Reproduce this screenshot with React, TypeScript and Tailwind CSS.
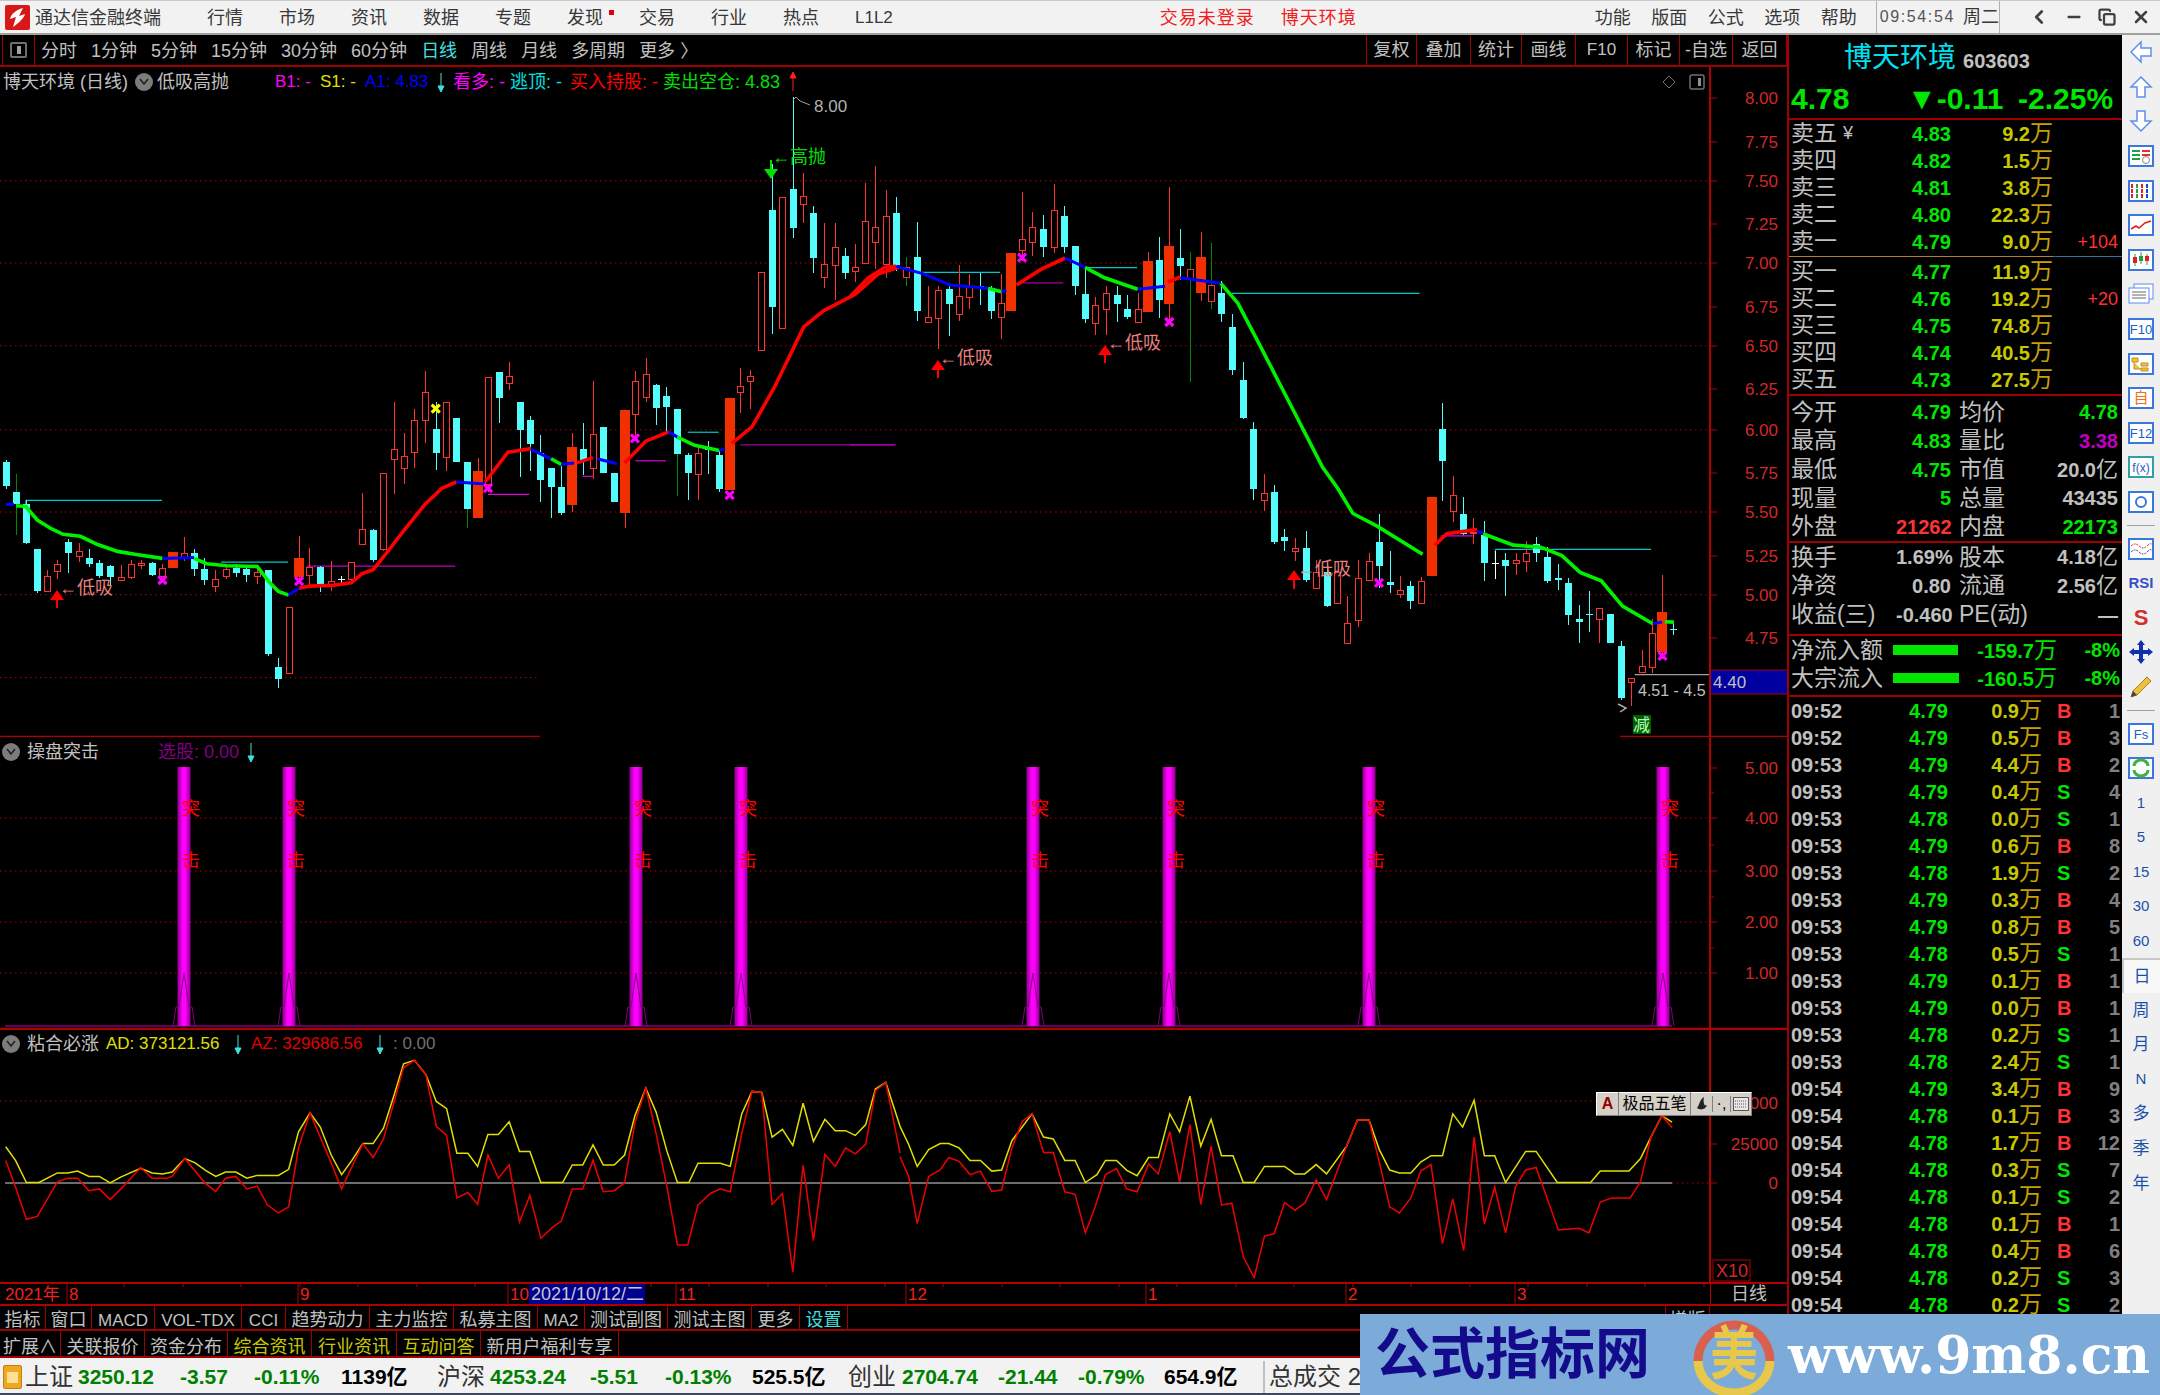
import { ChevronLeft, Minus, Copy, X } from "lucide-react";

// chart numbers below were read off zoomed crops, so they are kept in crop
// coordinates and converted here
const x6 = (z: number) => z / 1.742;
const y6 = (z: number) => 80 + z / 2.45;
const x7 = (z: number) => 850 + z / 1.6505;
const y7 = (z: number) => 80 + z / 2.376;
const x8 = (z: number) => z / 1.742;
const x9 = (z: number) => 900 + z / 1.742;
const y8 = (z: number) => 730 + z / 2.8;

type Candle = [number, string, number, number, number, number];

const candlesA: Candle[] = [
  [10, "c", 937, 995, 932, 1002], [28, "G", 1010, 1040, 965, 1115], [46, "c", 1040, 1135, 1030, 1138], [64, "c", 1150, 1252, 1150, 1258],
  [82, "r", 1215, 1252, 1200, 1255], [100, "r", 1187, 1203, 1175, 1222], [118, "c", 1132, 1160, 1125, 1208], [137, "r", 1155, 1165, 1135, 1180],
  [155, "c", 1172, 1187, 1150, 1192], [173, "c", 1183, 1215, 1175, 1220], [191, "c", 1190, 1218, 1188, 1240], [210, "r", 1217, 1225, 1188, 1228],
  [228, "r", 1187, 1218, 1175, 1222], [246, "r", 1183, 1188, 1175, 1198], [265, "c", 1183, 1212, 1180, 1214], [283, "r", 1195, 1215, 1185, 1218],
  [301, "R", 1157, 1196, 1157, 1196], [320, "r", 1158, 1170, 1120, 1178], [338, "c", 1158, 1198, 1150, 1215], [356, "c", 1198, 1225, 1170, 1238],
  [375, "r", 1222, 1240, 1200, 1255], [393, "r", 1198, 1215, 1185, 1222], [411, "c", 1195, 1208, 1185, 1218], [429, "c", 1197, 1212, 1188, 1230],
  [448, "r", 1205, 1215, 1190, 1235], [466, "c", 1200, 1407, 1200, 1410], [484, "c", 1437, 1468, 1415, 1490], [503, "r", 1290, 1452, 1290, 1452],
  [521, "R", 1172, 1218, 1118, 1225], [539, "r", 1193, 1212, 1147, 1245], [557, "c", 1192, 1235, 1190, 1255], [576, "r", 1228, 1240, 1178, 1252],
  [594, "w", 1222, 1224, 1215, 1232], [612, "r", 1180, 1222, 1180, 1235], [631, "r", 1100, 1137, 1013, 1137], [649, "c", 1102, 1175, 1100, 1180],
  [667, "r", 963, 1150, 963, 1155], [686, "r", 905, 928, 790, 1015], [704, "r", 920, 950, 865, 990], [722, "r", 833, 912, 805, 950],
  [740, "r", 765, 832, 712, 890], [759, "c", 855, 913, 790, 955], [777, "r", 790, 923, 788, 958], [795, "c", 827, 935, 827, 935],
  [814, "G", 937, 1050, 937, 1098], [832, "R", 958, 1072, 925, 1072], [850, "r", 728, 990, 728, 1010], [869, "c", 716, 780, 716, 840],
  [887, "r", 725, 743, 690, 760], [905, "c", 790, 858, 790, 972], [923, "c", 833, 892, 823, 958], [941, "c", 915, 980, 870, 1035],
  [960, "c", 950, 998, 950, 1072], [978, "c", 998, 1062, 945, 1065], [997, "R", 900, 1042, 865, 1058], [1015, "c", 903, 930, 840, 968],
  [1033, "r", 868, 950, 738, 978], [1051, "c", 850, 962, 850, 962], [1070, "c", 962, 1035, 962, 1035], [1088, "R", 808, 1060, 808, 1098],
  [1106, "r", 738, 818, 712, 885], [1125, "r", 720, 777, 680, 790], [1143, "c", 748, 803, 745, 845], [1161, "c", 775, 800, 752, 865],
  [1180, "G", 805, 917, 805, 1018], [1198, "c", 918, 962, 915, 1028], [1216, "r", 915, 965, 895, 1028], [1234, "c", 905, 907, 885, 965],
  [1253, "c", 918, 1002, 905, 1010], [1271, "R", 778, 1005, 778, 1005], [1289, "r", 750, 765, 705, 815], [1307, "r", 725, 737, 710, 805],
  [1326, "r", 470, 662, 470, 662], [1344, "c", 318, 557, 205, 622], [1362, "r", 287, 607, 287, 607], [1381, "c", 268, 362, 42, 388],
  [1399, "r", 283, 305, 228, 350], [1417, "c", 327, 435, 308, 472], [1436, "r", 452, 482, 350, 510], [1454, "r", 408, 453, 350, 538],
  [1472, "c", 430, 472, 412, 488],
];

const candlesB: Candle[] = [
  [8, "r", 445, 455, 390, 480], [24, "r", 335, 435, 245, 435], [41, "r", 350, 385, 205, 450], [59, "r", 323, 437, 262, 470],
  [76, "c", 316, 440, 278, 455], [93, "g", 445, 468, 420, 490], [110, "c", 420, 550, 338, 572], [128, "r", 563, 575, 490, 576],
  [146, "r", 498, 565, 490, 640], [163, "c", 497, 533, 490, 608], [180, "r", 513, 557, 440, 572], [197, "r", 490, 515, 460, 545],
  [215, "c", 489, 491, 458, 535], [232, "c", 495, 548, 490, 567], [249, "r", 530, 563, 460, 615], [266, "R", 412, 550, 412, 550],
  [284, "r", 377, 405, 265, 430], [301, "r", 350, 385, 313, 417], [318, "c", 355, 397, 320, 420], [336, "r", 310, 397, 248, 412],
  [353, "c", 323, 397, 300, 412], [371, "c", 395, 490, 395, 510], [388, "c", 508, 568, 450, 578], [405, "r", 535, 578, 515, 607],
  [423, "r", 507, 545, 490, 605], [440, "c", 512, 533, 490, 575], [458, "c", 545, 562, 510, 568], [475, "r", 545, 575, 505, 576],
  [492, "R", 430, 552, 408, 552], [510, "c", 427, 522, 372, 565], [527, "R", 395, 533, 255, 575], [544, "c", 422, 443, 355, 475],
  [561, "g", 450, 472, 408, 718], [579, "R", 420, 505, 360, 525], [596, "g", 488, 525, 388, 545], [613, "c", 505, 555, 478, 575],
  [631, "c", 588, 690, 555, 700], [648, "c", 712, 802, 670, 805], [665, "c", 830, 972, 812, 997], [683, "r", 982, 998, 937, 1025],
  [700, "c", 980, 1098, 962, 1102], [717, "c", 1087, 1096, 1068, 1120], [735, "r", 1112, 1120, 1088, 1143], [752, "c", 1112, 1187, 1072, 1192],
  [769, "r", 1170, 1207, 1140, 1208], [787, "c", 1170, 1250, 1150, 1252], [804, "r", 1170, 1243, 1170, 1243], [821, "r", 1290, 1338, 1225, 1338],
  [839, "r", 1183, 1282, 1140, 1300], [856, "r", 1143, 1188, 1125, 1190], [873, "c", 1098, 1155, 1030, 1208], [891, "c", 1193, 1200, 1118, 1218],
  [908, "r", 1212, 1222, 1178, 1230], [925, "c", 1202, 1238, 1190, 1258], [943, "r", 1190, 1243, 1182, 1243], [960, "R", 990, 1178, 990, 1178],
  [977, "c", 830, 905, 768, 1000], [995, "r", 987, 1023, 940, 1050], [1012, "c", 1030, 1078, 990, 1082], [1029, "r", 1074, 1077, 1040, 1102],
  [1047, "c", 1080, 1147, 1048, 1190], [1064, "w", 1147, 1150, 1120, 1185], [1081, "c", 1140, 1155, 1125, 1225], [1099, "r", 1140, 1148, 1125, 1175],
  [1116, "r", 1125, 1142, 1095, 1170], [1133, "c", 1103, 1125, 1087, 1145], [1150, "c", 1133, 1190, 1110, 1195], [1168, "c", 1183, 1188, 1150, 1212],
  [1185, "c", 1195, 1270, 1183, 1295], [1203, "c", 1280, 1288, 1248, 1338], [1220, "c", 1268, 1270, 1215, 1312], [1237, "r", 1255, 1280, 1255, 1338],
  [1254, "c", 1268, 1338, 1268, 1338], [1273, "c", 1345, 1468, 1332, 1472], [1289, "r", 1420, 1430, 1420, 1488], [1307, "r", 1393, 1406, 1355, 1410],
  [1324, "r", 1315, 1395, 1280, 1410], [1341, "R", 1265, 1360, 1175, 1375], [1358, "c", 1304, 1306, 1288, 1318],
];

type Seg = [string, number[]];

const maA: Seg[] = [
  ["#0000ff", [10, 1040, 24, 1040]],
  ["#00f000", [28, 1043, 45, 1045, 65, 1078, 90, 1100, 110, 1113, 140, 1118, 170, 1138, 205, 1155, 240, 1163, 283, 1172]],
  ["#0000ff", [283, 1172, 338, 1170]],
  ["#00f000", [338, 1172, 360, 1185, 395, 1190, 448, 1192, 470, 1232, 485, 1253, 503, 1262]],
  ["#0000ff", [503, 1262, 521, 1245]],
  ["#ff0000", [521, 1245, 540, 1240, 580, 1238, 612, 1232, 630, 1210, 650, 1200, 670, 1165, 700, 1110, 740, 1040, 770, 1000, 795, 985]],
  ["#0000ff", [795, 985, 845, 990]],
  ["#ff0000", [845, 985, 885, 912, 925, 903]],
  ["#0000ff", [925, 905, 960, 928]],
  ["#00f000", [960, 928, 978, 942]],
  ["#0000ff", [978, 942, 1000, 938]],
  ["#ff0000", [1005, 938, 1033, 925]],
  ["#0000ff", [1040, 928, 1075, 940]],
  ["#ff0000", [1088, 938, 1125, 885, 1165, 862]],
  ["#0000ff", [1165, 862, 1180, 875]],
  ["#00f000", [1180, 875, 1210, 895, 1253, 908]],
  ["#0000ff", [1253, 908, 1262, 903]],
  ["#ff0000", [1275, 890, 1310, 850, 1350, 750, 1400, 605, 1435, 565, 1490, 525, 1530, 475, 1568, 458]],
];

const maB: Seg[] = [
  ["#ff0000", [0, 515, 30, 470, 58, 445, 76, 443]],
  ["#0000ff", [76, 443, 120, 460, 165, 487, 228, 495]],
  ["#00f000", [228, 495, 250, 503]],
  ["#0000ff", [250, 503, 258, 500]],
  ["#ff0000", [275, 487, 315, 450, 355, 423]],
  ["#0000ff", [355, 423, 388, 445]],
  ["#00f000", [388, 445, 420, 470, 475, 497]],
  ["#0000ff", [475, 497, 520, 490]],
  ["#ff0000", [525, 480, 545, 468]],
  ["#0000ff", [545, 470, 612, 483]],
  ["#00f000", [612, 483, 640, 530, 680, 640, 730, 780, 780, 920, 805, 970, 830, 1030, 870, 1060, 945, 1127]],
  ["#ff0000", [965, 1105, 985, 1078, 1035, 1068]],
  ["#0000ff", [1035, 1072, 1045, 1078]],
  ["#00f000", [1045, 1078, 1095, 1105, 1140, 1110, 1175, 1130, 1205, 1170, 1240, 1190, 1275, 1250, 1325, 1292]],
  ["#0000ff", [1325, 1292, 1340, 1288]],
  ["#00f000", [1345, 1287, 1360, 1288]],
];

const levelsA: [string, number, number, number][] = [
  ["#00c8c8", 45, 282, 1030], ["#00c8c8", 385, 502, 1181], ["#c000c0", 535, 793, 1191], ["#e000e0", 850, 922, 1015],
  ["#e000e0", 1015, 1033, 971], ["#e000e0", 1107, 1160, 933], ["#00c8c8", 1198, 1252, 863], ["#a000a0", 1290, 1560, 894],
];
const levelsB: [string, number, number, number][] = [
  ["#00c8c8", 110, 248, 457], ["#a000a0", 283, 352, 482], ["#a000a0", 0, 75, 867], ["#00c8c8", 388, 474, 446],
  ["#00c8c8", 630, 940, 507], ["#e000e0", 975, 1028, 1083], ["#00c8c8", 1065, 1322, 1115], ["#a0a0a0", 1295, 1420, 1413],
];

const yellowA = [10, 1167, 27, 1205, 46, 1267, 68, 1267, 100, 1240, 118, 1240, 135, 1235, 155, 1250, 173, 1250, 192, 1268, 210, 1252, 245, 1227, 265, 1240, 283, 1243, 300, 1238, 322, 1200, 340, 1212, 358, 1233, 376, 1250, 393, 1238, 411, 1238, 430, 1255, 448, 1247, 485, 1247, 503, 1230, 520, 1125, 540, 1072, 558, 1112, 577, 1190, 595, 1245, 613, 1205, 632, 1158, 650, 1158, 668, 1115, 685, 1030, 703, 935, 722, 925, 742, 965, 760, 1040, 778, 1060, 796, 1185, 815, 1185, 832, 1222, 850, 1133, 868, 1133, 887, 1097, 905, 1180, 923, 1180, 942, 1267, 980, 1267, 997, 1218, 1015, 1218, 1033, 1162, 1051, 1218, 1070, 1218, 1088, 1190, 1106, 1080, 1125, 1003, 1143, 1070, 1162, 1180, 1180, 1267, 1200, 1267, 1216, 1213, 1255, 1213, 1272, 1222, 1292, 1075, 1310, 1012, 1327, 1015, 1345, 1140, 1363, 1118, 1381, 1163, 1399, 1045, 1417, 1152, 1437, 1090, 1455, 1122, 1473, 1122, 1490, 1135, 1508, 1105, 1525, 1005, 1543, 987, 1568, 1110];
const redA = [10, 1205, 27, 1280, 46, 1370, 65, 1362, 100, 1265, 118, 1255, 135, 1255, 155, 1290, 173, 1285, 192, 1315, 215, 1278, 245, 1225, 265, 1255, 290, 1255, 300, 1250, 322, 1200, 358, 1270, 376, 1292, 393, 1255, 411, 1250, 430, 1285, 448, 1277, 466, 1330, 485, 1352, 503, 1335, 520, 1170, 540, 1072, 575, 1205, 595, 1285, 632, 1158, 650, 1197, 668, 1145, 685, 1050, 703, 945, 722, 925, 742, 965, 760, 1110, 778, 1135, 796, 1310, 815, 1295, 832, 1328, 850, 1190, 868, 1255, 887, 1218, 905, 1378, 923, 1303, 942, 1423, 963, 1392, 978, 1375, 997, 1285, 1015, 1285, 1033, 1205, 1051, 1293, 1070, 1290, 1088, 1268, 1106, 1100, 1125, 1003, 1143, 1130, 1162, 1280, 1180, 1442, 1198, 1442, 1216, 1330, 1238, 1297, 1255, 1285, 1272, 1293, 1292, 1130, 1310, 1012, 1327, 1015, 1345, 1328, 1363, 1298, 1381, 1518, 1399, 1218, 1417, 1430, 1437, 1188, 1455, 1222, 1473, 1170, 1490, 1187, 1508, 1160, 1525, 1010, 1543, 987, 1568, 1185];
const yellowB = [0, 1110, 15, 1160, 30, 1222, 50, 1175, 70, 1158, 85, 1158, 103, 1170, 122, 1205, 140, 1205, 160, 1235, 177, 1232, 195, 1150, 230, 1075, 250, 1140, 267, 1145, 287, 1205, 305, 1205, 323, 1267, 343, 1245, 358, 1205, 377, 1205, 395, 1233, 413, 1248, 433, 1197, 450, 1197, 470, 1075, 487, 1125, 505, 1025, 524, 1165, 542, 1090, 560, 1192, 580, 1192, 598, 1267, 617, 1267, 635, 1222, 670, 1222, 688, 1243, 705, 1243, 725, 1217, 743, 1243, 778, 1165, 797, 1092, 817, 1092, 835, 1175, 853, 1232, 870, 1240, 890, 1240, 907, 1210, 925, 1192, 945, 1192, 963, 1075, 980, 1112, 1000, 1037, 1018, 1192, 1036, 1192, 1055, 1267, 1090, 1180, 1108, 1180, 1145, 1267, 1203, 1267, 1220, 1235, 1270, 1235, 1290, 1200, 1308, 1140, 1327, 1080, 1345, 1098];
const redB = [0, 1195, 15, 1250, 30, 1382, 50, 1250, 70, 1232, 85, 1197, 103, 1208, 122, 1245, 140, 1235, 160, 1292, 177, 1288, 195, 1170, 213, 1095, 230, 1075, 250, 1183, 267, 1183, 287, 1293, 305, 1300, 323, 1408, 340, 1335, 358, 1245, 377, 1228, 395, 1285, 413, 1293, 433, 1215, 450, 1243, 470, 1125, 487, 1265, 505, 1105, 524, 1328, 542, 1165, 560, 1330, 578, 1325, 598, 1475, 617, 1533, 635, 1417, 652, 1410, 670, 1323, 688, 1345, 705, 1325, 725, 1260, 743, 1315, 778, 1165, 797, 1092, 817, 1092, 835, 1210, 853, 1335, 870, 1352, 890, 1310, 907, 1235, 925, 1217, 945, 1438, 963, 1313, 982, 1458, 1000, 1140, 1018, 1383, 1036, 1280, 1055, 1408, 1072, 1280, 1090, 1232, 1108, 1225, 1127, 1310, 1147, 1400, 1183, 1395, 1200, 1408, 1220, 1322, 1240, 1310, 1272, 1310, 1290, 1265, 1308, 1140, 1327, 1080, 1345, 1113];

const toPts = (a: number[], fx: (n: number) => number, fy: (n: number) => number) => {
  const out: string[] = [];
  for (let i = 0; i < a.length; i += 2) out.push(`${fx(a[i]).toFixed(1)},${fy(a[i + 1]).toFixed(1)}`);
  return out.join(" ");
};

const AXIS = "#b00000";
const GRID = "#b00000";
const LABEL = "#d02828";

function CandleMark({ c, fx, fy }: { c: Candle; fx: (n: number) => number; fy: (n: number) => number }) {
  const [zx, kind, top, bot, hi, lo] = c;
  const x = Math.round(fx(zx));
  const t = Math.round(fy(top));
  const b = Math.round(fy(bot));
  const wick = kind === "c" ? "#54fcfc" : kind === "w" ? "#ffffff" : kind === "g" || kind === "G" ? "#008800" : "#ff3232";
  const solid = kind === "c" || kind === "G" || kind === "w";
  const wide = kind === "R";
  return (
    <g shapeRendering="crispEdges">
      <line x1={x + 0.5} x2={x + 0.5} y1={fy(hi)} y2={fy(lo)} stroke={wick} />
      {wide ? (
        <rect x={x - 5} y={t} width={10} height={b - t} fill="#f03000" />
      ) : solid ? (
        <rect x={x - 3} y={t} width={7} height={Math.max(b - t, 1)} fill={kind === "w" ? "#fff" : "#54fcfc"} />
      ) : (
        <rect x={x - 2.5} y={t + 0.5} width={6} height={Math.max(b - t, 1)} fill="#000" stroke="#ff3232" />
      )}
    </g>
  );
}

const Cross = ({ x, y, c = "#ff00ff" }: { x: number; y: number; c?: string }) => (
  <path d={`M${x - 4} ${y - 4}L${x + 4} ${y + 4}M${x + 4} ${y - 4}L${x - 4} ${y + 4}`} stroke={c} strokeWidth={3.2} />
);

const UpArrow = ({ x, y1, y2 }: { x: number; y1: number; y2: number }) => (
  <g>
    <line x1={x} x2={x} y1={y1 + 8} y2={y2} stroke="#ff0000" strokeWidth={2} />
    <path d={`M${x - 7} ${y1 + 10}L${x} ${y1}L${x + 7} ${y1 + 10}Z`} fill="#ff0000" />
  </g>
);

const Axis = ({ labels }: { labels: [string, number][] }) => (
  <g>
    {labels.map(([t, y]) => (
      <g key={t + y}>
        <line x1={1710} x2={1717} y1={y} y2={y} stroke={AXIS} />
        <text x={1778} y={y + 6} textAnchor="end" fontSize={17} fill={LABEL}>
          {t}
        </text>
      </g>
    ))}
  </g>
);

const HeaderArrow = ({ c = "#40e0e0", up }: { c?: string; up?: boolean }) => (
  <svg width="8" height="20" viewBox="0 0 8 20">
    {up ? <path d="M4 19V4M1 6L4 0L7 6Z" stroke={c} fill={c} /> : <path d="M4 1V16M1 14L4 20L7 14Z" stroke={c} fill={c} />}
  </svg>
);

const FoldDot = () => (
  <span className="w-[18px] h-[18px] rounded-full bg-[#7c7c7c] flex items-center justify-center shrink-0">
    <svg width="10" height="8" viewBox="0 0 10 8">
      <path d="M1 1L5 6L9 1" fill="none" stroke="#222" strokeWidth="1.6" />
    </svg>
  </span>
);

function MainPane() {
  const grid = [180.8, 263, 345.7, 429.8, 512, 594.7];
  return (
    <div className="relative h-[670px] shrink-0">
      <svg width="1787" height="670" viewBox="0 67 1787 670" className="block">
        {grid.map((y) => (
          <line key={y} x1={0} x2={1710} y1={y} y2={y} stroke={GRID} strokeDasharray="1.5 3.5" />
        ))}
        <line x1={0} x2={537} y1={677.6} y2={677.6} stroke={GRID} strokeDasharray="1.5 3.5" />
        {levelsA.map(([c, a, b, y]) => (
          <line key={a} x1={x6(a)} x2={x6(b)} y1={y6(y)} y2={y6(y)} stroke={c} strokeWidth={1.2} />
        ))}
        {levelsB.map(([c, a, b, y]) => (
          <line key={a} x1={x7(a)} x2={x7(b)} y1={y7(y)} y2={y7(y)} stroke={c} strokeWidth={1.2} />
        ))}
        <line x1={x6(45)} x2={x6(45)} y1={y6(1030)} y2={y6(1040)} stroke="#00c8c8" />
        <line x1={x7(1065)} x2={x7(1065)} y1={y7(1115)} y2={y7(1140)} stroke="#00c8c8" />
        {candlesA.map((c) => (
          <CandleMark key={c[0]} c={c} fx={x6} fy={y6} />
        ))}
        {candlesB.map((c) => (
          <CandleMark key={c[0]} c={c} fx={x7} fy={y7} />
        ))}
        {maA.map(([c, p], i) => (
          <polyline key={i} points={toPts(p, x6, y6)} fill="none" stroke={c} strokeWidth={c === "#0000ff" ? 3 : 3.6} />
        ))}
        {maB.map(([c, p], i) => (
          <polyline key={i} points={toPts(p, x7, y7)} fill="none" stroke={c} strokeWidth={c === "#0000ff" ? 3 : 3.6} />
        ))}
        <Cross x={x6(283)} y={y6(1225)} />
        <Cross x={x6(521)} y={y6(1228)} />
        <Cross x={x6(850)} y={y6(1000)} />
        <Cross x={x6(1106)} y={y6(878)} />
        <Cross x={x6(1271)} y={y6(1017)} />
        <Cross x={x6(759)} y={y6(805)} c="#ffff00" />
        <Cross x={x7(284)} y={y7(422)} />
        <Cross x={x7(527)} y={y7(575)} />
        <Cross x={x7(873)} y={y7(1195)} />
        <Cross x={x7(1341)} y={y7(1368)} />

        <UpArrow x={57} y1={590} y2={608} />
        <UpArrow x={938} y1={360} y2={378} />
        <UpArrow x={1105} y1={345} y2={363} />
        <UpArrow x={1294} y1={570} y2={589} />
        <text x={59} y={594} fontSize={18} fill="#e88080">←低吸</text>
        <text x={939} y={364} fontSize={18} fill="#e88080">←低吸</text>
        <text x={1107} y={349} fontSize={18} fill="#e88080">←低吸</text>
        <text x={1297} y={575} fontSize={18} fill="#e88080">←低吸</text>
        <line x1={771} x2={771} y1={160} y2={172} stroke="#00e000" strokeWidth={2} />
        <path d="M764 169L771 179L778 169Z" fill="#00e000" />
        <text x={772} y={163} fontSize={18} fill="#00e000">←高抛</text>
        <path d="M793 100L796 97L800 101L810 105" fill="none" stroke="#a0a0a0" />
        <text x={814} y={112} fontSize={17} fill="#b0b0b0">8.00</text>

        <path d="M1669 76L1675 82L1669 88L1663 82Z" fill="none" stroke="#707070" />
        <rect x={1690} y={75} width={14} height={14} rx={2} fill="none" stroke="#707070" strokeWidth={1.5} />
        <rect x={1698} y={78} width={3} height={8} fill="#909090" />

        <line x1={1710} x2={1710} y1={67} y2={737} stroke={AXIS} strokeWidth={2} />
        <Axis
          labels={[
            ["8.00", 98], ["7.75", 142], ["7.50", 181], ["7.25", 224], ["7.00", 263], ["6.75", 307], ["6.50", 346],
            ["6.25", 389], ["6.00", 430], ["5.75", 473], ["5.50", 512], ["5.25", 556], ["5.00", 595], ["4.75", 638],
          ]}
        />
        <rect x={1711} y={670} width={76} height={24} fill="#0000a0" />
        <line x1={1711} x2={1787} y1={670} y2={670} stroke={AXIS} />
        <line x1={1711} x2={1787} y1={694} y2={694} stroke={AXIS} />
        <text x={1713} y={688} fontSize={17} fill="#c0c0c0">4.40</text>
        <text x={1638} y={696} fontSize={16} fill="#c0c0c0">4.51 - 4.5</text>
        <path d="M1618 704L1626 708L1620 712" fill="none" stroke="#b0b0b0" strokeWidth={1.5} />
        <rect x={1633} y={715} width={18} height={19} fill="#006000" />
        <text x={1633} y={731} fontSize={17} fill="#b0ffb0">减</text>
        <line x1={0} x2={540} y1={736.5} y2={736.5} stroke={AXIS} strokeWidth={1.5} />
        <line x1={1620} x2={1787} y1={736.5} y2={736.5} stroke={AXIS} strokeWidth={1.5} />
      </svg>
      <div className="absolute top-[4px] left-[3px] flex items-center h-[22px] text-[18px] whitespace-nowrap">
        <span className="w-[132px] text-[#c0c0c0]">博天环境 (日线)</span>
        <FoldDot />
        <span className="w-[118px] ml-[4px] text-[#c0c0c0]">低吸高抛</span>
        <span className="w-[45px] text-[#ff00ff] text-[17px]">B1: -</span>
        <span className="w-[45px] text-[#e0e000] text-[17px]">S1: -</span>
        <span className="w-[72px] text-[#0000ff] text-[17px]">A1: 4.83</span>
        <span className="w-[16px] flex"><HeaderArrow /></span>
        <span className="w-[57px] text-[#ff00ff]">看多: -</span>
        <span className="w-[60px] text-[#00e0e0]">逃顶: -</span>
        <span className="w-[93px] text-[#ff0000]">买入持股: -</span>
        <span className="w-[126px] text-[#00e000]">卖出空仓: 4.83</span>
        <HeaderArrow c="#ff2020" up />
      </div>
    </div>
  );
}

const spikes = [184, 289, 636, 741, 1033, 1169, 1369, 1663];

function SignalPane() {
  return (
    <div className="relative h-[293px] shrink-0">
      <svg width="1787" height="293" viewBox="0 737 1787 293" className="block">
        <defs>
          <linearGradient id="spike" x1="0" x2="1" y1="0" y2="0">
            <stop offset="0" stopColor="#900090" />
            <stop offset="0.4" stopColor="#ff00ff" />
            <stop offset="0.6" stopColor="#ff00ff" />
            <stop offset="1" stopColor="#900090" />
          </linearGradient>
        </defs>
        {[818, 871, 922, 973].map((y) => (
          <line key={y} x1={0} x2={1710} y1={y} y2={y} stroke={GRID} strokeDasharray="1.5 3.5" />
        ))}
        <line x1={5} x2={1672} y1={1026} y2={1026} stroke="#800080" strokeWidth={1.5} />
        {spikes.map((c) => (
          <g key={c}>
            <rect x={c - 6.5} y={767} width={13} height={259} fill="url(#spike)" />
            <polyline
              points={`${c - 11},1026 ${c - 8},1007 ${c - 5},1007 ${c},973 ${c + 5},1007 ${c + 8},1007 ${c + 11},1026`}
              fill="none"
              stroke="#800080"
            />
            <text x={c - 2} y={815} fontSize={18} fill="#ff0000">突</text>
            <text x={c - 2} y={867} fontSize={18} fill="#ff0000">击</text>
          </g>
        ))}
        <line x1={1710} x2={1710} y1={737} y2={1030} stroke={AXIS} strokeWidth={2} />
        <Axis labels={[["5.00", 768], ["4.00", 818], ["3.00", 871], ["2.00", 922], ["1.00", 973]]} />
        {[793, 845, 897, 948].map((y) => (
          <line key={y} x1={1710} x2={1714} y1={y} y2={y} stroke={AXIS} />
        ))}
        <line x1={0} x2={1787} y1={1029} y2={1029} stroke={AXIS} strokeWidth={2.5} />
      </svg>
      <div className="absolute top-[4px] left-[2px] flex items-center h-[22px] text-[18px] whitespace-nowrap">
        <FoldDot />
        <span className="w-[131px] ml-[7px] text-[#c0c0c0]">操盘突击</span>
        <span className="w-[89px] text-[#800080]">选股: 0.00</span>
        <HeaderArrow />
      </div>
    </div>
  );
}

function LinePane() {
  return (
    <div className="relative h-[252px] shrink-0">
      <svg width="1787" height="252" viewBox="0 1030 1787 252" className="block">
        <line x1={0} x2={1710} y1={1101} y2={1101} stroke={GRID} strokeDasharray="1.5 3.5" />
        <line x1={5} x2={1672} y1={1183} y2={1183} stroke="#909090" strokeWidth={1.5} />
        <line x1={1672} x2={1710} y1={1183} y2={1183} stroke={GRID} strokeDasharray="1.5 3.5" />
        <polyline points={toPts(yellowA, x8, y8)} fill="none" stroke="#e0e000" strokeWidth={1.5} />
        <polyline points={toPts(yellowB, x9, y8)} fill="none" stroke="#e0e000" strokeWidth={1.5} />
        <polyline points={toPts(redA, x8, y8)} fill="none" stroke="#f00000" strokeWidth={1.5} />
        <polyline points={toPts(redB, x9, y8)} fill="none" stroke="#f00000" strokeWidth={1.5} />
        <line x1={1710} x2={1710} y1={1030} y2={1282} stroke={AXIS} strokeWidth={2} />
        <Axis labels={[["25000", 1144], ["0", 1183]]} />
        <text x={1778} y={1109} textAnchor="end" fontSize={17} fill={LABEL}>50000</text>
        <rect x={1713} y={1260} width={37} height={21} fill="none" stroke={AXIS} />
        <text x={1716} y={1277} fontSize={18} fill={LABEL}>X10</text>
      </svg>
      <div className="absolute top-[3px] left-[2px] flex items-center h-[22px] text-[18px] whitespace-nowrap">
        <FoldDot />
        <span className="w-[79px] ml-[7px] text-[#c0c0c0]">粘合必涨</span>
        <span className="w-[128px] text-[#e0e000] text-[17px]">AD: 373121.56</span>
        <HeaderArrow />
        <span className="w-[125px] ml-[9px] text-[#e00000] text-[17px]">AZ: 329686.56</span>
        <HeaderArrow />
        <span className="ml-[9px] text-[#707070] text-[17px]">: 0.00</span>
      </div>
      <div className="absolute left-[1596px] top-[62px] w-[156px] h-[24px] bg-[#d4d0c8] border border-t-white border-l-white border-r-[#808080] border-b-[#808080] flex items-center text-[16px] text-black">
        <span className="w-[22px] text-center text-[#900000] font-bold border-r border-[#808080]">A</span>
        <span className="w-[72px] text-center border-r border-[#808080] whitespace-nowrap">极品五笔</span>
        <span className="w-[22px] flex justify-center border-r border-[#808080]">
          <svg width="12" height="16" viewBox="0 0 12 16"><path d="M8 1C4 3 3 10 1 12C5 15 10 13 11 9C8 11 7 6 8 1Z" fill="#222" /></svg>
        </span>
        <span className="w-[18px] text-center border-r border-[#808080] leading-none">·,</span>
        <span className="flex-1 flex justify-center">
          <svg width="16" height="14" viewBox="0 0 16 14"><rect x="0.5" y="0.5" width="15" height="13" fill="#e8e8e8" stroke="#555" /><path d="M2 4H14M2 7H14M2 10H14" stroke="#555" strokeDasharray="1 1" /></svg>
        </span>
      </div>
    </div>
  );
}

function DateAxis() {
  const ticks: number[] = [];
  for (let x = 124; x < 1710; x += 58.5) ticks.push(Math.round(x));
  const months: [string, number][] = [["8", 67], ["9", 298], ["10", 508], ["11", 676], ["12", 906], ["1", 1146], ["2", 1346], ["3", 1515]];
  return (
    <div className="flex h-[24px] shrink-0 border-t-2 border-b-2 border-[#b00000]">
      <svg width="1710" height="20" viewBox="0 0 1710 20" className="block shrink-0">
        {ticks.map((x) => (
          <line key={x} x1={x} x2={x} y1={0} y2={3} stroke={AXIS} />
        ))}
        <text x={5} y={16} fontSize={17} fill="#f02020">2021年</text>
        {months.map(([m, x]) => (
          <g key={m}>
            <line x1={x} x2={x} y1={0} y2={20} stroke={AXIS} />
            <text x={x + 2} y={16} fontSize={17} fill="#f02020">{m}</text>
          </g>
        ))}
        <rect x={529} y={0} width={116} height={20} fill="#000090" />
        <text x={531} y={16} fontSize={18} fill="#c8c8c8">2021/10/12/二</text>
      </svg>
      <div className="flex-1 border-l border-[#b00000] text-[18px] text-[#c0c0c0] flex items-center justify-center">日线</div>
    </div>
  );
}

const tabCell = "h-full flex items-center justify-center border-r border-[#a00000] shrink-0 whitespace-nowrap";

function TabRows() {
  return (
    <div className="text-[18px] text-[#c0c0c0] shrink-0">
      <div className="flex h-[25px] border-b-2 border-[#a00000]">
        <span className={`${tabCell} w-[46px] pt-[6px]`}>指标</span>
        <span className={`${tabCell} w-[46px] pt-[6px]`}>窗口</span>
        <span className={`${tabCell} w-[63px] pt-[6px] text-[17px]`}>MACD</span>
        <span className={`${tabCell} w-[87px] pt-[6px] text-[17px]`}>VOL-TDX</span>
        <span className={`${tabCell} w-[44px] pt-[6px] text-[17px]`}>CCI</span>
        <span className={`${tabCell} w-[84px] pt-[6px]`}>趋势动力</span>
        <span className={`${tabCell} w-[84px] pt-[6px]`}>主力监控</span>
        <span className={`${tabCell} w-[84px] pt-[6px]`}>私募主图</span>
        <span className={`${tabCell} w-[47px] pt-[6px] text-[17px]`}>MA2</span>
        <span className={`${tabCell} w-[83px] pt-[6px]`}>测试副图</span>
        <span className={`${tabCell} w-[84px] pt-[6px]`}>测试主图</span>
        <span className={`${tabCell} w-[48px] pt-[6px]`}>更多</span>
        <span className={`${tabCell} w-[48px] pt-[6px] text-[#40e0e0]`}>设置</span>
        <span className={`${tabCell} ml-[817px] w-[45px] pt-[6px] border-l`}>增版</span>
      </div>
      <div className="flex h-[27px] border-b-2 border-[#a00000]">
        <span className={`${tabCell} w-[61px] pt-[7px]`}>扩展∧</span>
        <span className={`${tabCell} w-[84px] pt-[7px]`}>关联报价</span>
        <span className={`${tabCell} w-[83px] pt-[7px]`}>资金分布</span>
        <span className={`${tabCell} w-[84px] pt-[7px] text-[#c8c800]`}>综合资讯</span>
        <span className={`${tabCell} w-[85px] pt-[7px] text-[#c8c800]`}>行业资讯</span>
        <span className={`${tabCell} w-[84px] pt-[7px] text-[#c8c800]`}>互动问答</span>
        <span className={`${tabCell} w-[138px] pt-[7px]`}>新用户福利专享</span>
      </div>
    </div>
  );
}

const num = "font-bold text-[20px] leading-none";
const cjk = "text-[23px] leading-none text-[#c0c0c0] whitespace-nowrap";

function BookRow({ label, price, vol, extra, mark }: { label: string; price: string; vol: string; extra?: string; mark?: boolean }) {
  return (
    <div className="flex items-center h-[27px]">
      <span className={`${cjk} w-[52px]`}>{label}</span>
      <span className="w-[48px] text-[#c0c0c0] text-[18px]">{mark ? "¥" : ""}</span>
      <span className={`${num} w-[60px] text-right text-[#00e600]`}>{price}</span>
      <span className={`${num} w-[79px] text-right text-[#c8c800]`}>{vol}</span>
      <span className="w-[24px] text-[23px] leading-none text-[#c8a000]">万</span>
      <span className="w-[66px] pr-[2px] text-right text-[18px] leading-none text-[#ff3232]">{extra}</span>
    </div>
  );
}

function StatRow({ a, av, ac, b, bv, bc, unit, h }: { a: string; av: string; ac: string; b: string; bv: string; bc: string; unit?: boolean; h: string }) {
  return (
    <div className={`flex items-center ${h}`}>
      <span className={`${cjk} w-[105px]`}>{a}</span>
      <span className={`${num} w-[55px] text-right whitespace-nowrap ${ac}`}>{av}</span>
      <span className={`${cjk} w-[80px] ml-[8px]`}>{b}</span>
      <span className={`${num} w-[79px] text-right whitespace-nowrap ${bc}`}>
        {bv}
        {unit && <span className="text-[22px] font-normal">亿</span>}
      </span>
    </div>
  );
}

const ticksData: [string, string, string, string, string][] = [
  ["09:52", "4.79", "0.9", "B", "1"], ["09:52", "4.79", "0.5", "B", "3"], ["09:53", "4.79", "4.4", "B", "2"], ["09:53", "4.79", "0.4", "S", "4"],
  ["09:53", "4.78", "0.0", "S", "1"], ["09:53", "4.79", "0.6", "B", "8"], ["09:53", "4.78", "1.9", "S", "2"], ["09:53", "4.79", "0.3", "B", "4"],
  ["09:53", "4.79", "0.8", "B", "5"], ["09:53", "4.78", "0.5", "S", "1"], ["09:53", "4.79", "0.1", "B", "1"], ["09:53", "4.79", "0.0", "B", "1"],
  ["09:53", "4.78", "0.2", "S", "1"], ["09:53", "4.78", "2.4", "S", "1"], ["09:54", "4.79", "3.4", "B", "9"], ["09:54", "4.78", "0.1", "B", "3"],
  ["09:54", "4.78", "1.7", "B", "12"], ["09:54", "4.78", "0.3", "S", "7"], ["09:54", "4.78", "0.1", "S", "2"], ["09:54", "4.78", "0.1", "B", "1"],
  ["09:54", "4.78", "0.4", "B", "6"], ["09:54", "4.78", "0.2", "S", "3"], ["09:54", "4.78", "0.2", "S", "2"],
];

function QuotePanel() {
  const statLine = "h-[2px] bg-[#a00000] -ml-[2px] shrink-0";
  return (
    <div className="w-[335px] shrink-0 border-l-2 border-[#a00000] pl-[2px] bg-black flex flex-col overflow-hidden">
      <div className="h-[45px] flex items-center pl-[53px] shrink-0">
        <span className="text-[28px] leading-none text-[#00e0f0]">博天环境</span>
        <span className="ml-[7px] mt-[6px] text-[20px] font-bold text-[#c0c0c0]">603603</span>
      </div>
      <div className="h-[37px] mb-[1px] flex items-center font-bold text-[30px] leading-none text-[#00e600] shrink-0">
        <span className="w-[116px]">4.78</span>
        <span className="w-[111px]">▼-0.11</span>
        <span>-2.25%</span>
      </div>
      <div className={statLine} />
      <BookRow label="卖五" mark price="4.83" vol="9.2" />
      <BookRow label="卖四" price="4.82" vol="1.5" />
      <BookRow label="卖三" price="4.81" vol="3.8" />
      <BookRow label="卖二" price="4.80" vol="22.3" />
      <BookRow label="卖一" price="4.79" vol="9.0" extra="+104" />
      <div className="h-[3px] flex items-center -ml-[2px] shrink-0">
        <span className="h-[1.5px] w-[264px] bg-[#b08030]" />
        <span className="h-[1.5px] flex-1 bg-[#3070a0]" />
      </div>
      <BookRow label="买一" price="4.77" vol="11.9" />
      <BookRow label="买二" price="4.76" vol="19.2" extra="+20" />
      <BookRow label="买三" price="4.75" vol="74.8" />
      <BookRow label="买四" price="4.74" vol="40.5" />
      <BookRow label="买五" price="4.73" vol="27.5" />
      <div className={`${statLine} mt-[1px]`} />
      <StatRow h="h-[30px] pt-[2px]" a="今开" av="4.79" ac="text-[#00e600]" b="均价" bv="4.78" bc="text-[#00e600]" />
      <StatRow h="h-[29px]" a="最高" av="4.83" ac="text-[#00e600]" b="量比" bv="3.38" bc="text-[#c000c0]" />
      <StatRow h="h-[29px]" a="最低" av="4.75" ac="text-[#00e600]" b="市值" bv="20.0" bc="text-[#c0c0c0]" unit />
      <StatRow h="h-[28px]" a="现量" av="5" ac="text-[#00e600]" b="总量" bv="43435" bc="text-[#c0c0c0]" />
      <StatRow h="h-[29px]" a="外盘" av="21262" ac="text-[#ff3232]" b="内盘" bv="22173" bc="text-[#00e600]" />
      <div className={statLine} />
      <StatRow h="h-[28px]" a="换手" av="1.69%" ac="text-[#c0c0c0]" b="股本" bv="4.18" bc="text-[#c0c0c0]" unit />
      <StatRow h="h-[29px]" a="净资" av="0.80" ac="text-[#c0c0c0]" b="流通" bv="2.56" bc="text-[#c0c0c0]" unit />
      <StatRow h="h-[29px]" a="收益(三)" av="-0.460" ac="text-[#c0c0c0]" b="PE(动)" bv="—" bc="text-[#c0c0c0]" />
      <div className={`${statLine} mt-[5px]`} />
      <div className="flex items-center h-[28px] shrink-0">
        <span className={`${cjk} w-[102px]`}>净流入额</span>
        <span className="h-[10px] w-[65px] bg-[#00e600]" />
        <span className="w-[99px] text-right text-[20px] font-bold leading-none text-[#00e600] whitespace-nowrap">-159.7<span className="text-[23px] font-normal">万</span></span>
        <span className="w-[63px] text-right text-[20px] font-bold leading-none text-[#00e600]">-8%</span>
      </div>
      <div className="flex items-center h-[28px] shrink-0">
        <span className={`${cjk} w-[102px]`}>大宗流入</span>
        <span className="h-[10px] w-[66px] bg-[#00e600]" />
        <span className="w-[98px] text-right text-[20px] font-bold leading-none text-[#00e600] whitespace-nowrap">-160.5<span className="text-[23px] font-normal">万</span></span>
        <span className="w-[63px] text-right text-[20px] font-bold leading-none text-[#00e600]">-8%</span>
      </div>
      <div className={`${statLine} mt-[3px]`} />
      {ticksData.map(([t, p, v, s, n], i) => (
        <div key={i} className="flex items-center h-[27px] shrink-0">
          <span className={`${num} w-[100px] text-[#c0c0c0]`}>{t}</span>
          <span className={`${num} w-[57px] text-right text-[#00e600]`}>{p}</span>
          <span className={`${num} w-[71px] text-right text-[#c8c800]`}>{v}</span>
          <span className="w-[38px] text-[23px] leading-none text-[#c8a000]">万</span>
          <span className={`${num} w-[16px] ${s === "B" ? "text-[#ff3232]" : "text-[#00e600]"}`}>{s}</span>
          <span className={`${num} w-[47px] text-right text-[#808080]`}>{n}</span>
        </div>
      ))}
    </div>
  );
}

const IconBox = ({ children, stroke = "#3a78e0" }: { children?: React.ReactNode; stroke?: string }) => (
  <svg width="26" height="22" viewBox="0 0 26 22">
    <rect x="1" y="1" width="24" height="20" fill="#fff" stroke={stroke} strokeWidth="2" />
    {children}
  </svg>
);

const BlueArrow = ({ rot }: { rot: number }) => (
  <svg width="26" height="24" viewBox="0 0 26 24">
    <path
      d="M13 2L23 12H17V22H9V12H3Z"
      fill="#fff"
      stroke="#5a90f0"
      strokeWidth="1.5"
      transform={`rotate(${rot} 13 12)`}
    />
  </svg>
);

const IconLabel = ({ t, c = "#2060c0", size = 13 }: { t: string; c?: string; size?: number }) => (
  <text x="13" y="16" textAnchor="middle" fontSize={size} fill={c}>{t}</text>
);

const Rows = ({ colors }: { colors: string[] }) => (
  <g strokeWidth="2" strokeDasharray="4 1">
    {colors.map((c, i) => (
      <line key={i} x1={4 + i * 5} x2={4 + i * 5} y1="4" y2="18" stroke={c} />
    ))}
  </g>
);

const SideRule = () => (
  <div className="h-[12px] shrink-0 flex items-center px-[5px]">
    <span className="h-[1px] w-full bg-[#a0a0a0]" />
  </div>
);

function Sidebar() {
  const periods = "flex items-center justify-center h-[34.6px] shrink-0 text-[#1c50a8]";
  const slot = "flex items-center justify-center h-[34.6px] shrink-0";
  return (
    <div className="flex-1 bg-[#f0f0f0] flex flex-col">
      <div className={slot}><BlueArrow rot={-90} /></div>
      <div className={slot}><BlueArrow rot={0} /></div>
      <div className={slot}><BlueArrow rot={180} /></div>
      <div className={slot}><IconBox><path d="M4 6H12M4 10H12M4 14H12" stroke="#20a040" strokeWidth="2" /><path d="M14 6H22M14 10H22" stroke="#e03030" strokeWidth="2" /><circle cx="18" cy="15" r="3.5" fill="none" stroke="#888" /></IconBox></div>
      <div className={slot}><IconBox><Rows colors={["#e02020", "#20a040", "#e02020", "#2040d0"]} /></IconBox></div>
      <div className={slot}><IconBox><path d="M3 15L8 12L11 14L17 9L23 7" fill="none" stroke="#e02020" strokeWidth="1.6" /></IconBox></div>
      <div className={slot}><IconBox><path d="M7 5V17M13 3V15M19 5V16" stroke="#20a040" /><path d="M7 8V14M19 7V12" stroke="#e02020" strokeWidth="4" /><path d="M13 7V12" stroke="#20a040" strokeWidth="4" /></IconBox></div>
      <div className={slot}>
        <svg width="26" height="22" viewBox="0 0 26 22"><rect x="6" y="1" width="19" height="15" fill="#fff" stroke="#5a90f0" /><rect x="1" y="5" width="20" height="15" fill="#fff" stroke="#5a90f0" /><path d="M4 9H18M4 12H18M4 15H18" stroke="#666" /></svg>
      </div>
      <div className={slot}><IconBox><IconLabel t="F10" /></IconBox></div>
      <div className={slot}><IconBox><path d="M4 5H10V9H4ZM13 10H20V13H13ZM13 15H20V18H13ZM6 9V16H13" fill="#f0c040" stroke="#c09020" /></IconBox></div>
      <div className={slot}><IconBox><IconLabel t="自" c="#f07020" size={15} /></IconBox></div>
      <div className={slot}><IconBox><IconLabel t="F12" /></IconBox></div>
      <div className={slot}><IconBox stroke="#30a0a0"><IconLabel t="f(x)" c="#2060c0" size={12} /></IconBox></div>
      <div className={slot}><IconBox><circle cx="13" cy="11" r="5" fill="none" stroke="#3a78e0" strokeWidth="2" /></IconBox></div>
      <SideRule />
      <div className={slot}><IconBox><path d="M3 8Q7 4 11 8T19 8T24 7" fill="none" stroke="#e02020" strokeDasharray="2 1" /><path d="M3 14Q7 10 11 14T19 14T24 13" fill="none" stroke="#3040c0" strokeDasharray="2 1" /></IconBox></div>
      <div className={`${slot} text-[15px] font-bold text-[#3850c8]`}>RSI</div>
      <div className={`${slot} text-[22px] font-bold text-[#d03030]`}>S</div>
      <div className={slot}>
        <svg width="26" height="26" viewBox="0 0 26 26"><path d="M13 1L17 6H15V11H20V9L25 13L20 17V15H15V20H17L13 25L9 20H11V15H6V17L1 13L6 9V11H11V6H9Z" fill="#1030b0" /></svg>
      </div>
      <div className={slot}>
        <svg width="26" height="26" viewBox="0 0 26 26"><path d="M3 23L5 17L19 3L23 7L9 21Z" fill="#f0c040" stroke="#a08020" /><path d="M3 23L5 17L9 21Z" fill="#444" /></svg>
      </div>
      <SideRule />
      <div className={slot}><IconBox><IconLabel t="Fs" /></IconBox></div>
      <div className={slot}><IconBox><path d="M6 9A7 6 0 0 1 20 9M20 13A7 6 0 0 1 6 13" fill="none" stroke="#40b040" strokeWidth="3" /></IconBox></div>
      <div className={`${periods} text-[15px]`}>1</div>
      <div className={`${periods} text-[15px]`}>5</div>
      <div className={`${periods} text-[15px]`}>15</div>
      <div className={`${periods} text-[15px]`}>30</div>
      <div className={`${periods} text-[15px]`}>60</div>
      <div className={`${periods} text-[17px] bg-[#f8f8f8] border-t-2 border-l-2 border-[#c8c8c8]`}>日</div>
      <div className={`${periods} text-[17px]`}>周</div>
      <div className={`${periods} text-[17px]`}>月</div>
      <div className={`${periods} text-[15px]`}>N</div>
      <div className={`${periods} text-[17px]`}>多</div>
      <div className={`${periods} text-[17px]`}>季</div>
      <div className={`${periods} text-[17px]`}>年</div>
    </div>
  );
}

function TopBar() {
  return (
    <div className="h-[35px] shrink-0 bg-[#f2f2f2] border-t border-[#c8c8c8] border-b-2 border-b-[#a0a0a0] flex items-center text-[18px] text-[#383838] whitespace-nowrap">
      <svg width="25" height="25" viewBox="0 0 25 25" className="ml-[5px] shrink-0">
        <rect width="25" height="25" rx="2" fill="#d81818" />
        <path d="M18 3C11 5 6 9 5 14L11 12L8 22C14 18 19 13 20 9L14 11Z" fill="#fff" />
      </svg>
      <span className="ml-[5px] w-[172px] pt-[2px]">通达信金融终端</span>
      <div className="flex gap-[36px] items-center pt-[2px]">
        <span>行情</span>
        <span>市场</span>
        <span>资讯</span>
        <span>数据</span>
        <span>专题</span>
        <span className="relative">
          发现
          <span className="absolute -right-[11px] top-[5px] w-[5px] h-[5px] bg-[#e00000]" />
        </span>
        <span>交易</span>
        <span>行业</span>
        <span>热点</span>
        <span className="text-[17px]">L1L2</span>
      </div>
      <span className="ml-[267px] pt-[2px] text-[#f02020] tracking-[1px]">交易未登录</span>
      <span className="ml-[26px] pt-[2px] text-[#f02020] tracking-[1px]">博天环境</span>
      <div className="ml-[238px] flex gap-[20.5px] pt-[2px]">
        <span>功能</span>
        <span>版面</span>
        <span>公式</span>
        <span>选项</span>
        <span>帮助</span>
      </div>
      <div className="ml-[19px] h-full border-l border-r border-[#b0b0b0] w-[124px] flex items-center pl-[3px] gap-[8px] shrink-0">
        <span className="text-[16px] tracking-[1.6px] text-[#555]">09:54:54</span>
        <span>周二</span>
      </div>
      <div className="flex-1 flex items-center justify-between pl-[28px] pr-[9px] text-[#404040]">
        <ChevronLeft size={22} strokeWidth={3} />
        <Minus size={18} strokeWidth={3.5} />
        <Copy size={18} strokeWidth={3} />
        <X size={20} strokeWidth={3} />
      </div>
    </div>
  );
}

function Toolbar() {
  const right = "h-full flex items-center justify-center border-l border-[#a00000] shrink-0";
  return (
    <div className="h-[32px] shrink-0 border-b-2 border-[#a00000] flex items-center text-[18px] text-[#c0c0c0] whitespace-nowrap">
      <div className="h-full w-[33px] ml-[2px] border-x border-[#a00000] flex items-center justify-center">
        <span className="w-[17px] h-[16px] border-2 border-[#707070] rounded-[2px] flex justify-center py-[2px]">
          <span className="w-[4px] bg-[#a0a0a0]" />
        </span>
      </div>
      <div className="flex gap-[14px] ml-[6px] pt-[2px]">
        <span>分时</span>
        <span>1分钟</span>
        <span>5分钟</span>
        <span>15分钟</span>
        <span>30分钟</span>
        <span>60分钟</span>
        <span className="text-[#40e0e0]">日线</span>
        <span>周线</span>
        <span>月线</span>
        <span>多周期</span>
        <span>更多 〉</span>
      </div>
      <div className="ml-auto h-full flex border-r border-[#a00000]">
        <span className={`${right} w-[50px]`}>复权</span>
        <span className={`${right} w-[54px]`}>叠加</span>
        <span className={`${right} w-[51px]`}>统计</span>
        <span className={`${right} w-[54px]`}>画线</span>
        <span className={`${right} w-[52px] text-[17px]`}>F10</span>
        <span className={`${right} w-[52px]`}>标记</span>
        <span className={`${right} w-[53px]`}>-自选</span>
        <span className={`${right} w-[54px]`}>返回</span>
      </div>
    </div>
  );
}

const statusItems: { t: string; c: string }[] = [
  { t: "上证", c: "w-[53px] text-[24px] text-[#333]" },
  { t: "3250.12", c: "w-[102px] text-[#008000]" },
  { t: "-3.57", c: "w-[74px] text-[#008000]" },
  { t: "-0.11%", c: "w-[87px] text-[#008000]" },
  { t: "1139亿", c: "w-[96px] text-black" },
  { t: "沪深", c: "w-[53px] text-[24px] text-[#333]" },
  { t: "4253.24", c: "w-[100px] text-[#008000]" },
  { t: "-5.51", c: "w-[75px] text-[#008000]" },
  { t: "-0.13%", c: "w-[87px] text-[#008000]" },
  { t: "525.5亿", c: "w-[96px] text-black" },
  { t: "创业", c: "w-[54px] text-[24px] text-[#333]" },
  { t: "2704.74", c: "w-[96px] text-[#008000]" },
  { t: "-21.44", c: "w-[80px] text-[#008000]" },
  { t: "-0.79%", c: "w-[86px] text-[#008000]" },
  { t: "654.9亿", c: "w-[99px] text-black" },
];

function StatusBar() {
  return (
    <div className="h-[37px] shrink-0 bg-[#f2f2f2] border-b-2 border-[#404858] flex items-center pt-[3px] text-[21px] font-bold whitespace-nowrap overflow-hidden">
      <span className="ml-[3px] w-[19px] h-[24px] mr-[3px] rounded-[2px] bg-[#f0a820] border border-[#c08010] flex items-center justify-center shrink-0">
        <span className="w-[11px] h-[11px] bg-[#ffe090]" />
      </span>
      {statusItems.map((s) => (
        <span key={s.t} className={`${s.c} shrink-0 ${s.t.length === 2 ? "font-normal" : ""}`}>{s.t}</span>
      ))}
      <span className="h-full border-l-2 border-[#c0c0c0] pl-[4px] flex items-center text-[24px] font-normal text-[#333]">总成交 2</span>
    </div>
  );
}

function Watermark() {
  return (
    <div className="absolute left-[1360px] bottom-0 w-[800px] h-[81px] bg-[#7cabd9] flex items-center overflow-hidden">
      <span className="ml-[15px] w-[290px] text-[55px] leading-none font-bold text-[#140a8c] whitespace-nowrap">公式指标网</span>
      <svg width="82" height="80" viewBox="0 0 82 80" className="ml-[28px] shrink-0">
        <path d="M5 46A36 36 0 0 1 77 46" fill="none" stroke="#d9604f" strokeWidth="9" />
        <path d="M5 46A36 32 0 0 0 77 46" fill="none" stroke="#e8c84a" strokeWidth="9" />
        <text x="0" y="0" transform="translate(41 59) scale(0.95 1.15)" textAnchor="middle" fontSize="50" fontWeight="700" fill="#e8c84a">美</text>
      </svg>
      <span className="ml-[13px] text-[52px] leading-none font-bold text-white font-['DejaVu_Serif',serif] whitespace-nowrap">www.9m8.cn</span>
    </div>
  );
}

export default function App() {
  return (
    <div className="relative w-[2160px] h-[1395px] overflow-hidden bg-black flex flex-col font-['Liberation_Sans','Noto_Sans_CJK_SC',sans-serif]">
      <TopBar />
      <div className="flex h-[1323px] shrink-0">
        <div className="w-[1787px] shrink-0 flex flex-col overflow-hidden">
          <Toolbar />
          <MainPane />
          <SignalPane />
          <LinePane />
          <DateAxis />
          <TabRows />
        </div>
        <QuotePanel />
        <Sidebar />
      </div>
      <StatusBar />
      <Watermark />
    </div>
  );
}
